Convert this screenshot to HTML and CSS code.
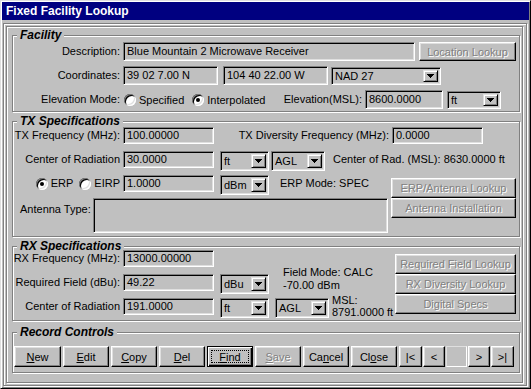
FILE: index.html
```html
<!DOCTYPE html>
<html>
<head>
<meta charset="utf-8">
<title>Fixed Facility Lookup</title>
<link rel="stylesheet" href="styles.css">
</head>
<body>
<div class="window">
  <div class="titlebar">Fixed Facility Lookup</div>
  <div class="outer">
    <div class="inner">

      <fieldset class="group g-fac">
        <legend>Facility</legend>
        <div class="fac-rows">
          <div class="frow">
            <span class="lbl">Description:</span>
            <div class="field f19 w292">Blue Mountain 2 Microwave Receiver</div>
            <button class="btn dis w97 loc">Location Lookup</button>
          </div>
          <div class="frow">
            <span class="lbl">Coordinates:</span>
            <div class="field f19 w95">39 02 7.00 N</div>
            <div class="field f19 w105 ml5">104 40 22.00 W</div>
            <div class="select s18 w110 ml3"><span class="sel-text">NAD 27</span><span class="drop"><svg width="7" height="4" viewBox="0 0 7 4"><path d="M0 0h7v1H0zM1 1h5v1H1zM2 2h3v1H2zM3 3h1v1H3z"/></svg></span></div>
          </div>
          <div class="frow">
            <span class="lbl">Elevation Mode:</span>
            <div class="radios">
              <span class="radio"></span><span class="rtext">Specified</span>
              <span class="radio on ml8"></span><span class="rtext">Interpolated</span>
            </div>
            <span class="lbl msl">Elevation(MSL):</span>
            <div class="field f19 w78">8600.0000</div>
            <div class="select s18 w54 ml4"><span class="sel-text">ft</span><span class="drop"><svg width="7" height="4" viewBox="0 0 7 4"><path d="M0 0h7v1H0zM1 1h5v1H1zM2 2h3v1H2zM3 3h1v1H3z"/></svg></span></div>
          </div>
        </div>
      </fieldset>

      <fieldset class="group g-tx">
        <legend>TX Specifications</legend>
        <div class="tx-body">
          <div class="row">
            <span class="lbl">TX Frequency (MHz):</span>
            <div class="field w91">100.00000</div>
            <span class="lbl div">TX Diversity Frequency (MHz):</span>
            <div class="field w91">0.0000</div>
          </div>
          <div class="row">
            <span class="lbl">Center of Radiation</span>
            <div class="field w91">30.0000</div>
            <div class="select w49 ml6"><span class="sel-text">ft</span><span class="drop"><svg width="7" height="4" viewBox="0 0 7 4"><path d="M0 0h7v1H0zM1 1h5v1H1zM2 2h3v1H2zM3 3h1v1H3z"/></svg></span></div>
            <div class="select w54 ml2"><span class="sel-text">AGL</span><span class="drop"><svg width="7" height="4" viewBox="0 0 7 4"><path d="M0 0h7v1H0zM1 1h5v1H1zM2 2h3v1H2zM3 3h1v1H3z"/></svg></span></div>
            <span class="note ml8">Center of Rad. (MSL): 8630.0000 ft</span>
          </div>
          <div class="lower">
            <div class="tx-left">
              <div class="row">
                <div class="lbl rlbl">
                  <span class="radio on"></span><span class="rtext">ERP</span>
                  <span class="radio ml6"></span><span class="rtext">EIRP</span>
                </div>
                <div class="field w91">1.0000</div>
                <div class="select w49 ml6"><span class="sel-text">dBm</span><span class="drop"><svg width="7" height="4" viewBox="0 0 7 4"><path d="M0 0h7v1H0zM1 1h5v1H1zM2 2h3v1H2zM3 3h1v1H3z"/></svg></span></div>
                <span class="note ml11">ERP Mode: SPEC</span>
              </div>
              <div class="ant-row">
                <span class="ant-lbl">Antenna Type:</span>
                <div class="field ant"></div>
              </div>
            </div>
            <div class="tx-right">
              <button class="btn dis sbtn">ERP/Antenna Lookup</button>
              <button class="btn dis sbtn">Antenna Installation</button>
            </div>
          </div>
        </div>
      </fieldset>

      <fieldset class="group g-rx">
        <legend>RX Specifications</legend>
        <div class="rx-body">
          <div class="rx-left">
            <div class="row">
              <span class="lbl">RX Frequency (MHz):</span>
              <div class="field w91">13000.00000</div>
            </div>
            <div class="row">
              <span class="lbl">Required Field (dBu):</span>
              <div class="field w91">49.22</div>
              <div class="select w49 ml6"><span class="sel-text">dBu</span><span class="drop"><svg width="7" height="4" viewBox="0 0 7 4"><path d="M0 0h7v1H0zM1 1h5v1H1zM2 2h3v1H2zM3 3h1v1H3z"/></svg></span></div>
              <div class="mode">Field Mode: CALC<br>-70.00 dBm</div>
            </div>
            <div class="row">
              <span class="lbl">Center of Radiation</span>
              <div class="field w91">191.0000</div>
              <div class="select w49 ml6"><span class="sel-text">ft</span><span class="drop"><svg width="7" height="4" viewBox="0 0 7 4"><path d="M0 0h7v1H0zM1 1h5v1H1zM2 2h3v1H2zM3 3h1v1H3z"/></svg></span></div>
              <div class="select w54 ml6"><span class="sel-text">AGL</span><span class="drop"><svg width="7" height="4" viewBox="0 0 7 4"><path d="M0 0h7v1H0zM1 1h5v1H1zM2 2h3v1H2zM3 3h1v1H3z"/></svg></span></div>
              <div class="msltext">MSL:<br>8791.0000 ft</div>
            </div>
          </div>
          <div class="rx-right">
            <button class="btn dis rbtn">Required Field Lookup</button>
            <button class="btn dis rbtn">RX Diversity Lookup</button>
            <button class="btn dis rbtn">Digital Specs</button>
          </div>
        </div>
      </fieldset>

      <fieldset class="group g-rec">
        <legend>Record Controls</legend>
        <div class="rec-row">
          <button class="btn rb w47"><u>N</u>ew</button>
          <button class="btn rb"><u>E</u>dit</button>
          <button class="btn rb"><u>C</u>opy</button>
          <button class="btn rb"><u>D</u>el</button>
          <button class="btn rb def"><u>F</u>ind</button>
          <button class="btn rb dis"><u>S</u>ave</button>
          <button class="btn rb">Ca<u>n</u>cel</button>
          <button class="btn rb">Cl<u>o</u>se</button>
          <div class="nav">
            <button class="btn nb w23">|&lt;</button>
            <button class="btn nb">&lt;</button>
            <div class="navbox"></div>
            <button class="btn nb">&gt;</button>
            <button class="btn nb w23">&gt;|</button>
          </div>
        </div>
      </fieldset>

    </div>
  </div>
</div>
</body>
</html>
```

FILE: styles.css
```css
* { box-sizing: border-box; }
html, body { margin: 0; padding: 0; }
body {
  background: #c0c0c0;
  font-family: "Liberation Sans", Arial, sans-serif;
  font-size: 11px;
  color: #000;
}

.window {
  width: 531px;
  height: 389px;
  display: flex;
  flex-direction: column;
  background: #c0c0c0;
  border: 1px solid;
  border-color: #dfdfdf #000 #000 #dfdfdf;
  padding: 1px;
  box-shadow: inset 1px 1px #fff, inset -1px -1px #808080;
}
.titlebar {
  flex: none;
  height: 18px;
  background: #000080;
  color: #fff;
  font-weight: bold;
  font-size: 12px;
  line-height: 18px;
  padding-left: 4px;
}
.outer {
  flex: 1;
  display: flex;
  margin: 3px 2px 1px 1px;
  padding: 2px 3px 2px 2px;
  border: 1px solid #808080;
  box-shadow: inset 1px 1px #fff, 1px 1px #fff;
}
.inner {
  flex: 1;
  padding: 2px 2px 0 5px;
  border: 1px solid #808080;
  box-shadow: inset 1px 1px #fff, 1px 1px #fff;
}

/* group boxes */
.group {
  margin: 0;
  padding: 0;
  min-width: 0;
  border: 1px solid #808080;
  box-shadow: inset 1px 1px #fff, 1px 1px #fff;
}
.group legend {
  margin-left: 4px;
  padding: 0 3px;
  font-size: 12px;
  font-weight: bold;
  font-style: italic;
  line-height: 12px;
  background: #c0c0c0;
}
.g-tx { margin-top: 3px; }
.g-rx { margin-top: 3px; }
.g-rec { margin-top: 5px; }

/* rows */
.fac-rows {
  display: flex;
  flex-direction: column;
  gap: 5px;
  padding: 1px 0 2px;
}
.frow {
  display: flex;
  align-items: flex-end;
  height: 19px;
}
.frow .lbl { line-height: 19px; align-self: center; }

.tx-body { padding: 0 0 3px; display: flex; flex-direction: column; gap: 4px; }
.row {
  display: flex;
  align-items: flex-start;
  height: 20px;
}
.lbl {
  flex: none;
  width: 107px;
  margin-right: 3px;
  text-align: right;
  white-space: nowrap;
  line-height: 17px;
}
.lbl.div { width: 175px; }
.lbl.msl { width: 94px; }
.note { white-space: nowrap; line-height: 17px; }

.radios {
  flex: none;
  width: 145px;
  display: flex;
  align-items: center;
  align-self: center;
  padding-left: 1px;
}
.rlbl {
  display: flex;
  align-items: center;
  justify-content: flex-end;
  height: 17px;
}
.rtext { margin-left: 3px; white-space: nowrap; }
.radio {
  flex: none;
  position: relative;
  width: 12px;
  height: 12px;
  border-radius: 50%;
  background: #fff;
  box-shadow: inset 1px 1px #808080, inset -1px -1px #fff, inset 2px 2px #000, inset -2px -2px #dfdfdf;
}
.radio.on::after {
  content: "";
  position: absolute;
  left: 4px;
  top: 4px;
  width: 4px;
  height: 4px;
  border-radius: 50%;
  background: #000;
}

/* fields */
.field {
  flex: none;
  height: 17px;
  background: #c0c0c0;
  border: 1px solid;
  border-color: #808080 #fff #fff #808080;
  box-shadow: inset 1px 1px #000, inset -1px -1px #dfdfdf;
  padding: 0 3px;
  line-height: 15px;
  white-space: nowrap;
  overflow: hidden;
}
.field.f19 { height: 19px; line-height: 17px; }
.w292 { width: 292px; }
.w95 { width: 95px; }
.w105 { width: 105px; }
.w110 { width: 110px; }
.w78 { width: 78px; }
.w91 { width: 91px; }
.w49 { width: 49px; }
.w54 { width: 54px; }
.w97 { width: 97px; }
.ml2 { margin-left: 2px; }
.ml3 { margin-left: 3px; }
.ml4 { margin-left: 4px; }
.ml5 { margin-left: 5px; }
.ml6 { margin-left: 6px; }
.ml8 { margin-left: 8px; }
.ml11 { margin-left: 11px; }

.select {
  flex: none;
  display: flex;
  height: 20px;
  background: #c0c0c0;
  border: 1px solid;
  border-color: #808080 #fff #fff #808080;
  box-shadow: inset 1px 1px #000, inset -1px -1px #dfdfdf;
  padding: 2px;
}
.select.s18 { height: 18px; }
.sel-text {
  flex: 1;
  padding-left: 1px;
  line-height: 15px;
  white-space: nowrap;
  overflow: hidden;
}
.s18 .sel-text { line-height: 13px; }
.drop {
  flex: none;
  width: 15px;
  display: flex;
  align-items: center;
  justify-content: center;
  background: #c0c0c0;
  border: 1px solid;
  border-color: #dfdfdf #000 #000 #dfdfdf;
  box-shadow: inset 1px 1px #fff, inset -1px -1px #808080;
}
.drop svg { display: block; fill: #000; }

/* buttons */
.btn {
  flex: none;
  display: flex;
  align-items: center;
  justify-content: center;
  margin: 0;
  padding: 0;
  font-family: "Liberation Sans", Arial, sans-serif;
  font-size: 11px;
  color: #000;
  background: #c0c0c0;
  border: 1px solid;
  border-color: #fff #000 #000 #fff;
  box-shadow: inset -1px -1px #808080, inset 1px 1px #dfdfdf;
  white-space: nowrap;
}
.btn.dis { color: #808080; text-shadow: 1px 1px 0 #fff; }
.loc { height: 19px; margin-left: 4px; }

.lower { display: flex; }
.tx-left { flex: none; width: 375px; }
.ant-row { display: flex; margin-top: 3px; }
.ant-lbl { flex: none; width: 80px; padding-left: 7px; line-height: 17px; margin-top: 3px; }
.field.ant { width: 295px; height: 35px; }
.tx-right {
  flex: none;
  width: 125px;
  margin-left: 3px;
  margin-top: 3px;
  display: flex;
  flex-direction: column;
}
.sbtn { width: 125px; height: 20px; }

.rx-body { display: flex; margin-top: -2px; padding-bottom: 2px; }
.rx-left { flex: none; width: 379px; display: flex; flex-direction: column; gap: 4px; }
.mode {
  margin-left: 14px;
  margin-top: -8px;
  line-height: 13px;
  white-space: nowrap;
}
.msltext {
  margin-left: 3px;
  margin-top: -4px;
  line-height: 12px;
  white-space: nowrap;
}
.rx-right {
  flex: none;
  width: 121px;
  margin-left: 3px;
  margin-top: 4px;
  display: flex;
  flex-direction: column;
}
.rbtn { width: 121px; height: 20px; }

.rec-row {
  display: flex;
  gap: 2px;
  padding: 8px 0 5px 1px;
}
.rb { width: 46px; height: 21px; }
.rb.w47 { width: 47px; }
.rb u { text-decoration-thickness: 1px; text-underline-offset: 1px; }
.btn.def {
  position: relative;
  border-color: #000;
  box-shadow: inset 1px 1px #fff, inset -1px -1px #000, inset -2px -2px #808080;
}
.btn.def::after {
  content: "";
  position: absolute;
  left: 3px;
  top: 3px;
  right: 3px;
  bottom: 3px;
  border: 1px dotted #000;
}
.nav { display: flex; gap: 1px; }
.nb { width: 22px; height: 21px; }
.nb.w23 { width: 23px; }
.navbox {
  width: 21px;
  height: 21px;
  border-right: 1px solid #fff;
  border-bottom: 1px solid #fff;
  border-top: 1px solid #dfdfdf;
  border-left: 1px solid #dfdfdf;
}
```
